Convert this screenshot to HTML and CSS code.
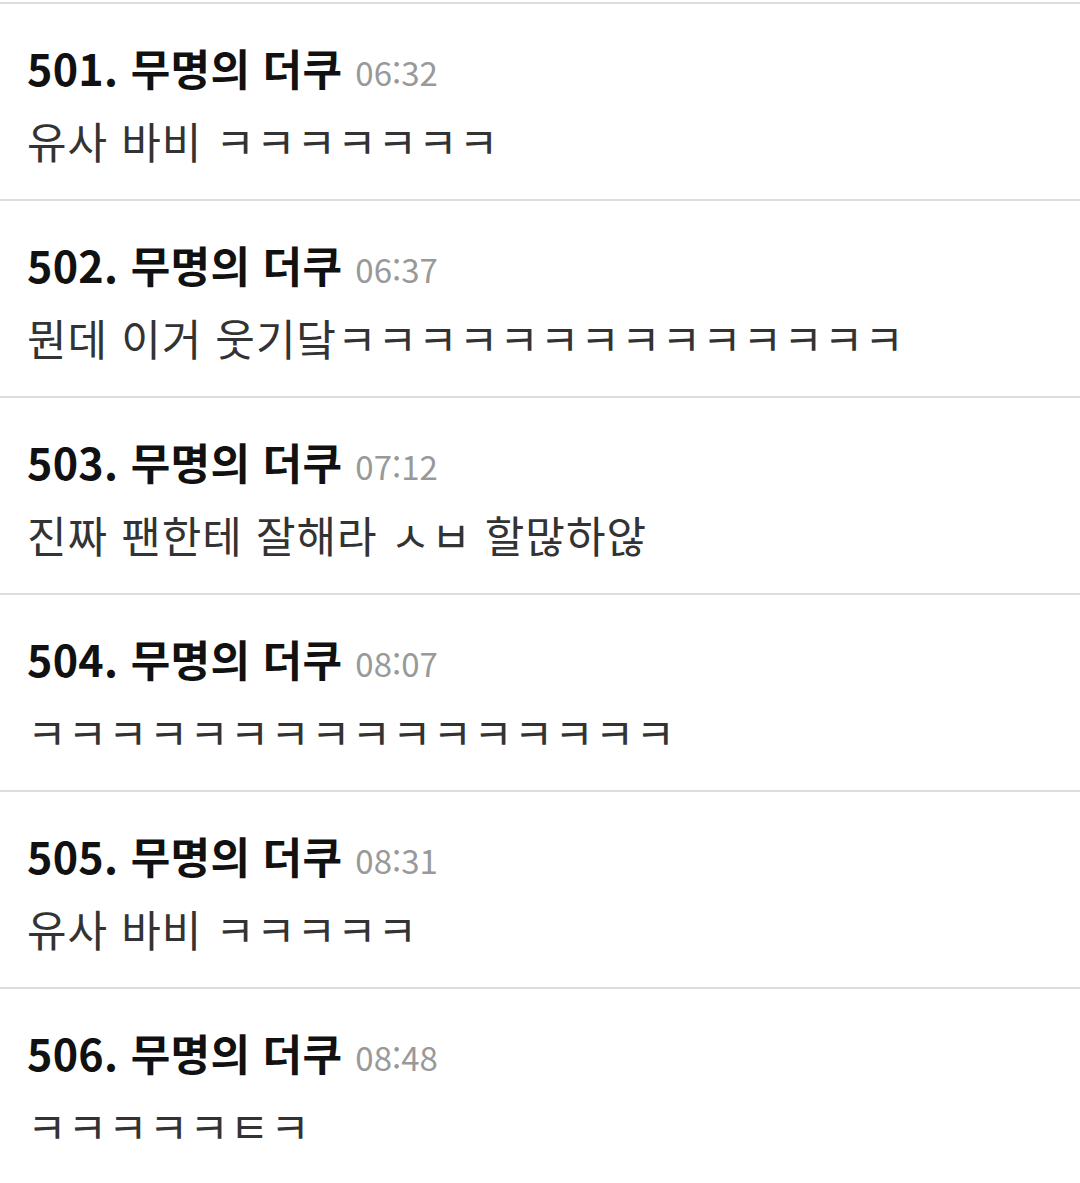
FILE: index.html
```html
<!DOCTYPE html>
<html lang="ko">
<head>
    <meta charset="UTF-8">
    <meta name="viewport" content="width=device-width, initial-scale=1.0">
    <title>댓글</title>
    <link rel="stylesheet" href="styles.css">
</head>
<body>

    <ul class="comments">
        <li class="comment">
            <div class="comment-head"><span class="author">501. 무명의 더쿠</span><span class="time">06:32</span></div>
            <p class="comment-body">유사 바비 ㅋㅋㅋㅋㅋㅋㅋ</p>
        </li>
        <li class="comment">
            <div class="comment-head"><span class="author">502. 무명의 더쿠</span><span class="time">06:37</span></div>
            <p class="comment-body">뭔데 이거 웃기닼ㅋㅋㅋㅋㅋㅋㅋㅋㅋㅋㅋㅋㅋㅋ</p>
        </li>
        <li class="comment">
            <div class="comment-head"><span class="author">503. 무명의 더쿠</span><span class="time">07:12</span></div>
            <p class="comment-body">진짜 팬한테 잘해라 ㅅㅂ 할많하않</p>
        </li>
        <li class="comment">
            <div class="comment-head"><span class="author">504. 무명의 더쿠</span><span class="time">08:07</span></div>
            <p class="comment-body">ㅋㅋㅋㅋㅋㅋㅋㅋㅋㅋㅋㅋㅋㅋㅋㅋ</p>
        </li>
        <li class="comment">
            <div class="comment-head"><span class="author">505. 무명의 더쿠</span><span class="time">08:31</span></div>
            <p class="comment-body">유사 바비 ㅋㅋㅋㅋㅋ</p>
        </li>
        <li class="comment">
            <div class="comment-head"><span class="author">506. 무명의 더쿠</span><span class="time">08:48</span></div>
            <p class="comment-body">ㅋㅋㅋㅋㅋㅌㅋ</p>
        </li>
    </ul>

</body>
</html>
```

FILE: styles.css
```css
body { margin: 0; background: #fff; font-family: "Noto Sans CJK KR", "Noto Sans", sans-serif; color: #333; }
.comments { list-style: none; margin: 2px 0 0; padding: 0; }
.comment { border-top: 2px solid #ddd; padding: 38px 27px 0; height: 157px; }
.comment-head { line-height: 50px; white-space: nowrap; }
.author { font-size: 43px; font-weight: bold; color: #111; letter-spacing: 0.3px; }
.time { font-size: 33px; color: #999; margin-left: 13px; }
.comment-body { margin: 0; font-size: 43px; letter-spacing: 1px; line-height: 72px; white-space: nowrap; }
```
